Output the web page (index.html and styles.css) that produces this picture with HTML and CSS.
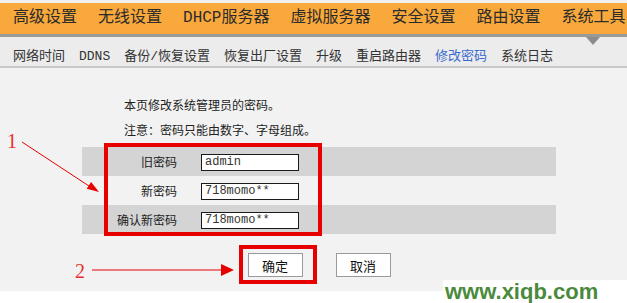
FILE: index.html
```html
<!DOCTYPE html>
<html lang="zh-CN">
<head>
<meta charset="UTF-8">
<title>修改密码</title>
<link rel="stylesheet" href="styles.css">
</head>
<body>

<div class="page">
  <div class="top-strip"></div>
  <div class="main-nav">
    <span class="nav-item">高级设置</span>
    <span class="nav-item">无线设置</span>
    <span class="nav-item">DHCP服务器</span>
    <span class="nav-item">虚拟服务器</span>
    <span class="nav-item">安全设置</span>
    <span class="nav-item">路由设置</span>
    <span class="nav-item active">系统工具</span>
  </div>
  <div class="sub-nav">
    <span class="sub-item">网络时间</span>
    <span class="sub-item">DDNS</span>
    <span class="sub-item">备份/恢复设置</span>
    <span class="sub-item">恢复出厂设置</span>
    <span class="sub-item">升级</span>
    <span class="sub-item">重启路由器</span>
    <span class="sub-item current">修改密码</span>
    <span class="sub-item">系统日志</span>
  </div>

  <div class="content">
    <p class="note">本页修改系统管理员的密码。</p>
    <p class="note">注意：密码只能由数字、字母组成。</p>

    <div class="form-table">
      <div class="row dark">
        <label class="label">旧密码</label>
        <div class="field"><input class="text-input" type="text" value="admin"></div>
      </div>
      <div class="row">
        <label class="label">新密码</label>
        <div class="field"><input class="text-input" type="text" value="718momo**"></div>
      </div>
      <div class="row dark">
        <label class="label">确认新密码</label>
        <div class="field"><input class="text-input" type="text" value="718momo**"></div>
      </div>
    </div>

    <div class="buttons">
      <button class="btn">确定</button>
      <button class="btn">取消</button>
    </div>
  </div>

  <!-- annotations drawn over the screenshot -->
  <svg class="marks" width="627" height="303" viewBox="0 0 627 303">
    <rect x="106" y="145" width="214" height="89" fill="none" stroke="#e60000" stroke-width="4"/>
    <rect x="241" y="247" width="74" height="35" fill="none" stroke="#e60000" stroke-width="4"/>
    <text x="7" y="148" class="mark-num">1</text>
    <line x1="22" y1="142" x2="89" y2="186" stroke="#e60000" stroke-width="1"/>
    <polygon points="99,192 86.7,188.8 91.1,182.1" fill="#e60000"/>
    <text x="75" y="278" class="mark-num">2</text>
    <line x1="92" y1="270" x2="222" y2="270" stroke="#e60000" stroke-width="1"/>
    <polygon points="234,270 221,264 221,276" fill="#e60000"/>
  </svg>

  <div class="watermark">www.xiqb.com</div>
</div>

</body>
</html>
```

FILE: styles.css
```css
body {
  margin: 0;
  background-color: #fff;
  font-family: "Liberation Mono", "Noto Sans CJK SC", monospace;
  color: #333;
}
.page {
  position: relative;
  width: 627px;
  height: 303px;
  overflow: hidden;
}
.top-strip {
  height: 3px;
  background-color: #f0f0f0;
}
.main-nav {
  display: flex;
  gap: 21px;
  height: 31px;
  padding-left: 13px;
  background-color: #f9a83b;
  border-bottom: 3px solid #9a9a9a;
  font-size: 16px;
  line-height: 31px;
  color: #2b2b2b;
}
.nav-item {
  position: relative;
  white-space: nowrap;
}
.nav-item.active::after {
  content: "";
  position: absolute;
  left: 24px;
  top: 34px;
  border-left: 7px solid transparent;
  border-right: 7px solid transparent;
  border-top: 8px solid #8d8d8d;
}
.sub-nav {
  display: flex;
  gap: 14px;
  height: 19px;
  padding: 10px 0 0 13px;
  background-color: #ececec;
  border-bottom: 2px solid #c9c9c9;
  font-size: 13px;
  line-height: 19px;
}
.sub-item {
  white-space: nowrap;
}
.sub-item.current {
  color: #3a6ad0;
}
.content {
  height: 194px;
  padding-top: 29px;
  background-color: #f2f2f2;
}
.note {
  margin: 0 0 5px 124px;
  font-size: 12px;
  line-height: 20px;
  color: #222;
}
.form-table {
  width: 474px;
  margin-left: 82px;
}
.row {
  display: grid;
  grid-template-columns: 107px 1fr;
  align-items: center;
  height: 29px;
}
.row.dark {
  background-color: #d4d4d4;
}
.label {
  padding-right: 12px;
  text-align: right;
  font-size: 12px;
  color: #222;
}
.field {
  padding-left: 12px;
  display: flex;
}
.text-input {
  box-sizing: border-box;
  width: 98px;
  height: 17px;
  margin-top: 1px;
  padding: 0 3px;
  border: 1px solid #1a1a1a;
  background-color: #fff;
  font-family: "Liberation Mono", monospace;
  font-size: 12px;
  color: #333;
}
.buttons {
  display: flex;
  justify-content: center;
  gap: 33px;
  width: 474px;
  margin: 19px 0 0 82px;
}
.btn {
  box-sizing: border-box;
  width: 55px;
  height: 24px;
  padding: 0;
  border: 1px solid #9a9a9a;
  background-color: #fff;
  font-family: "Noto Sans CJK SC", sans-serif;
  font-size: 13px;
  color: #111;
}
.marks {
  position: absolute;
  left: 0;
  top: 0;
  pointer-events: none;
}
.mark-num {
  font-family: "Liberation Serif", serif;
  font-size: 20px;
  fill: #e63030;
}
.watermark {
  position: absolute;
  left: 443px;
  top: 280px;
  width: 184px;
  height: 23px;
  padding-left: 2px;
  background-color: #fff;
  font-family: "Liberation Sans", sans-serif;
  font-weight: bold;
  font-size: 22px;
  line-height: 23px;
  color: #4a8a3c;
}
```
